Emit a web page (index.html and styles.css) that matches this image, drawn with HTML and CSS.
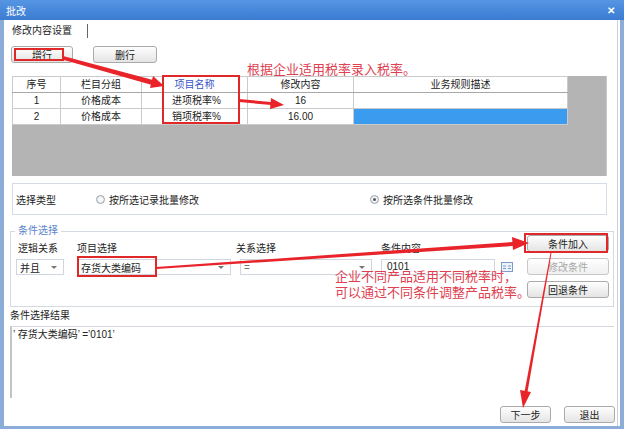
FILE: index.html
```html
<!DOCTYPE html>
<html lang="zh-CN">
<head>
    <meta charset="UTF-8">
    <title>批改</title>
    <link rel="stylesheet" href="styles.css">
</head>
<body>
<div class="window">
    <div class="titlebar">
        <span class="title">批改</span>
        <span class="close">✕</span>
    </div>
    <div class="frame">
        <div class="client">
            <div class="tabs"><div class="tab">修改内容设置</div></div>

            <div class="toolbar">
                <button class="btn btn-add">增行</button>
                <button class="btn btn-del">删行</button>
            </div>

            <div class="grid-area">
                <table class="grid">
                    <colgroup>
                        <col style="width:48px"><col style="width:81px"><col style="width:106px"><col style="width:106px"><col>
                    </colgroup>
                    <thead>
                        <tr><th>序号</th><th>栏目分组</th><th class="name-head">项目名称</th><th>修改内容</th><th>业务规则描述</th></tr>
                    </thead>
                    <tbody>
                        <tr><td>1</td><td>价格成本</td><td class="name">进项税率%</td><td>16</td><td></td></tr>
                        <tr><td>2</td><td>价格成本</td><td class="name">销项税率%</td><td>16.00</td><td class="selected"></td></tr>
                    </tbody>
                </table>
            </div>

            <div class="type-group">
                <span class="type-label">选择类型</span>
                <label class="radio radio-first"><span class="radio-dot"></span>按所选记录批量修改</label>
                <label class="radio checked"><span class="radio-dot"></span>按所选条件批量修改</label>
            </div>

            <fieldset class="cond-group">
                <legend class="cond-legend">条件选择</legend>
                <div class="cond-body">
                    <div class="cond-fields">
                        <div class="field field-logic">
                            <span class="field-label">逻辑关系</span>
                            <div class="combo combo-logic"><span>并且</span><span class="arrow"></span></div>
                        </div>
                        <div class="field field-item">
                            <span class="field-label">项目选择</span>
                            <div class="combo combo-item"><span>存货大类编码</span><span class="arrow"></span></div>
                        </div>
                        <div class="field field-rel">
                            <span class="field-label">关系选择</span>
                            <div class="combo combo-rel"><span>=</span><span class="arrow"></span></div>
                        </div>
                        <div class="field field-value">
                            <span class="field-label">条件内容</span>
                            <div class="value-row">
                                <div class="text-input">0101</div>
                                <svg class="pick-icon" width="12" height="10" viewBox="0 0 12 10">
                                    <rect x="0.5" y="0.5" width="11" height="9" fill="#eef3fa" stroke="#7c9cc8"/>
                                    <line x1="2" y1="4" x2="5" y2="4" stroke="#7c9cc8"/>
                                    <line x1="7" y1="4" x2="10" y2="4" stroke="#7c9cc8"/>
                                    <line x1="2" y1="6.5" x2="5" y2="6.5" stroke="#7c9cc8"/>
                                    <line x1="7" y1="6.5" x2="10" y2="6.5" stroke="#7c9cc8"/>
                                </svg>
                            </div>
                        </div>
                    </div>
                    <div class="cond-buttons">
                        <button class="btn">条件加入</button>
                        <button class="btn" disabled>修改条件</button>
                        <button class="btn">回退条件</button>
                    </div>
                </div>
            </fieldset>

            <div class="result-label">条件选择结果</div>
            <div class="result-box">’ 存货大类编码’ =’0101’</div>

            <div class="footer">
                <button class="btn">下一步</button>
                <button class="btn">退出</button>
            </div>
        </div>
    </div>

    <!-- 标注 -->
    <div class="mark mark-add"></div>
    <div class="mark mark-name"></div>
    <div class="mark mark-item"></div>
    <div class="mark mark-cond"></div>
    <div class="note note-top">根据企业适用税率录入税率。</div>
    <div class="note note-mid">企业不同产品适用不同税率时，<br>可以通过不同条件调整产品税率。</div>

    <svg class="arrows" width="624" height="429" viewBox="0 0 624 429">
        <g fill="#e8242a" stroke="none">
            <polygon points="63,56 64,60 152,85 153,80"/>
            <polygon points="164,86 153,76 150,88"/>
            <polygon points="239,99 239,102 271,105 271,102"/>
            <polygon points="284,105 271,98 270,109"/>
            <polygon points="156,267 156,269 513,246 513,242"/>
            <polygon points="529,243 512,237 513,250"/>
            <polygon points="550.5,253 551.5,253 527.5,392 524.5,392"/>
            <polygon points="523,408 531,392 520,390"/>
        </g>
    </svg>
</div>
</body>
</html>
```

FILE: styles.css
```css
* {
    box-sizing: border-box;
}
body {
    margin: 0;
    background: #fff;
    font-family: "Liberation Sans", "Noto Sans CJK SC", sans-serif;
    font-size: 10px;
    color: #222;
}
.window {
    position: relative;
    width: 624px;
    height: 429px;
    overflow: hidden;
    background: #fff;
}
.titlebar {
    height: 20px;
    display: flex;
    align-items: center;
    justify-content: space-between;
    padding: 0 9px 0 6px;
    background: linear-gradient(#5595e3, #3b7cd2);
    color: #fff;
}
.close {
    font-size: 10px;
    font-weight: bold;
}
.frame {
    height: 409px;
    border: 4px solid #8dadd9;
    border-top: 0;
    border-bottom-width: 3px;
    background: #fff;
}
.client {
    height: 100%;
    margin-right: 2px;
    border-right: 1px solid #cbd2dc;
}
.tabs {
    height: 21px;
    padding: 4px 0 0 8px;
}
.tab {
    width: 76px;
    height: 14px;
    line-height: 14px;
    border-right: 1px solid #666;
}
.toolbar {
    display: flex;
    gap: 20px;
    margin-top: 5px;
    padding-left: 7px;
}
.btn {
    height: 17px;
    padding: 0;
    border: 1px solid #aaa;
    border-radius: 3px;
    background: linear-gradient(#fefefe, #e4e4e4);
    font: inherit;
    color: #222;
}
.btn:disabled {
    color: #a8a8a8;
    border-color: #c8c8c8;
    background: linear-gradient(#fefefe, #f0f0f0);
}
.btn-add {
    width: 62px;
}
.btn-del {
    width: 64px;
}

/* 表格 */
.grid-area {
    width: 595px;
    height: 100px;
    margin: 13px 0 0 8px;
    background: #b4b4b4;
    border-right: 1px solid #c8c8c8;
}
.grid {
    width: 556px;
    table-layout: fixed;
    border-collapse: collapse;
    background: #fff;
}
.grid th,
.grid td {
    height: 16px;
    padding: 0;
    border: 1px solid #cacaca;
    font-weight: normal;
    text-align: center;
    line-height: 13px;
}
.grid th {
    border-bottom-color: #a8a8a8;
}
.grid .name-head {
    color: #3a55c8;
}
.grid .name {
    text-align: left;
    padding-left: 30px;
}
.grid .selected {
    background: #3b9bee;
}

/* 选择类型 */
.type-group {
    display: flex;
    align-items: center;
    width: 595px;
    height: 32px;
    margin: 7px 0 0 8px;
    padding-left: 3px;
    border: 1px solid #d6dce4;
}
.type-label {
    width: 80px;
}
.radio {
    display: flex;
    align-items: center;
    gap: 4px;
}
.radio-first {
    width: 274px;
}
.radio-dot {
    position: relative;
    width: 9px;
    height: 9px;
    border: 1px solid #9aa3ad;
    border-radius: 50%;
    background: radial-gradient(#fff, #e0e3e8);
}
.radio.checked .radio-dot::after {
    content: "";
    position: absolute;
    left: 2px;
    top: 2px;
    width: 3px;
    height: 3px;
    border-radius: 50%;
    background: #555;
}

/* 条件选择 */
.cond-group {
    width: 604px;
    height: 83px;
    margin: 9px 0 0 6px;
    padding: 0 4px;
    border: 1px solid #d4dae2;
}
.cond-legend {
    padding: 0 3px;
    line-height: 14px;
    color: #5c84c8;
}
.cond-body {
    display: flex;
    justify-content: space-between;
}
.cond-fields {
    display: flex;
    margin-top: 5px;
}
.field {
    display: flex;
    flex-direction: column;
    gap: 4px;
}
.field-label {
    line-height: 12px;
}
.field-logic {
    margin-left: 1px;
}
.field-logic .field-label {
    padding-left: 2px;
}
.field-item {
    margin-left: 13px;
}
.field-rel {
    margin-left: 5px;
}
.field-rel .combo {
    margin-left: 4px;
}
.field-value {
    margin-left: 9px;
}
.combo {
    display: flex;
    align-items: center;
    justify-content: space-between;
    height: 16px;
    padding: 0 6px 0 3px;
    border: 1px solid #cfd6df;
    background: #fff;
}
.combo .arrow {
    border-left: 3px solid transparent;
    border-right: 3px solid transparent;
    border-top: 3px solid #777;
}
.combo-logic {
    width: 48px;
}
.combo-item {
    width: 154px;
}
.combo-rel {
    width: 132px;
    color: #777;
}
.value-row {
    display: flex;
    align-items: center;
    gap: 6px;
}
.text-input {
    width: 114px;
    height: 16px;
    line-height: 14px;
    padding-left: 5px;
    border: 1px solid #cfd6df;
}
.cond-buttons {
    display: flex;
    flex-direction: column;
    gap: 6px;
    margin-top: -3px;
}
.cond-buttons .btn {
    width: 82px;
}

/* 结果 */
.result-label {
    margin-top: 3px;
    padding-left: 6px;
    line-height: 12px;
}
.result-box {
    width: 604px;
    height: 72px;
    margin: 4px 0 0 6px;
    padding: 2px 1px;
    border-top: 1px solid #d4d9e0;
    border-left: 2px solid #c4c4c4;
    line-height: 12px;
}
.footer {
    display: flex;
    justify-content: flex-end;
    gap: 13px;
    margin-top: 8px;
    padding-right: 2px;
}
.footer .btn {
    width: 51px;
}

/* 红色标注 */
.mark {
    position: absolute;
    border: 2px solid #e02828;
}
.mark-add {
    left: 14px;
    top: 48px;
    width: 50px;
    height: 13px;
}
.mark-name {
    left: 162px;
    top: 75px;
    width: 78px;
    height: 49px;
}
.mark-item {
    left: 77px;
    top: 256px;
    width: 80px;
    height: 21px;
}
.mark-cond {
    left: 524px;
    top: 233px;
    width: 84px;
    height: 20px;
}
.note {
    position: absolute;
    font-family: "Noto Sans CJK SC", sans-serif;
    font-size: 13px;
    color: #e04050;
    white-space: nowrap;
}
.note-top {
    left: 247px;
    top: 60px;
    line-height: 17px;
}
.note-mid {
    left: 335px;
    top: 268px;
    line-height: 16px;
}
.arrows {
    position: absolute;
    left: 0;
    top: 0;
    pointer-events: none;
}
```
